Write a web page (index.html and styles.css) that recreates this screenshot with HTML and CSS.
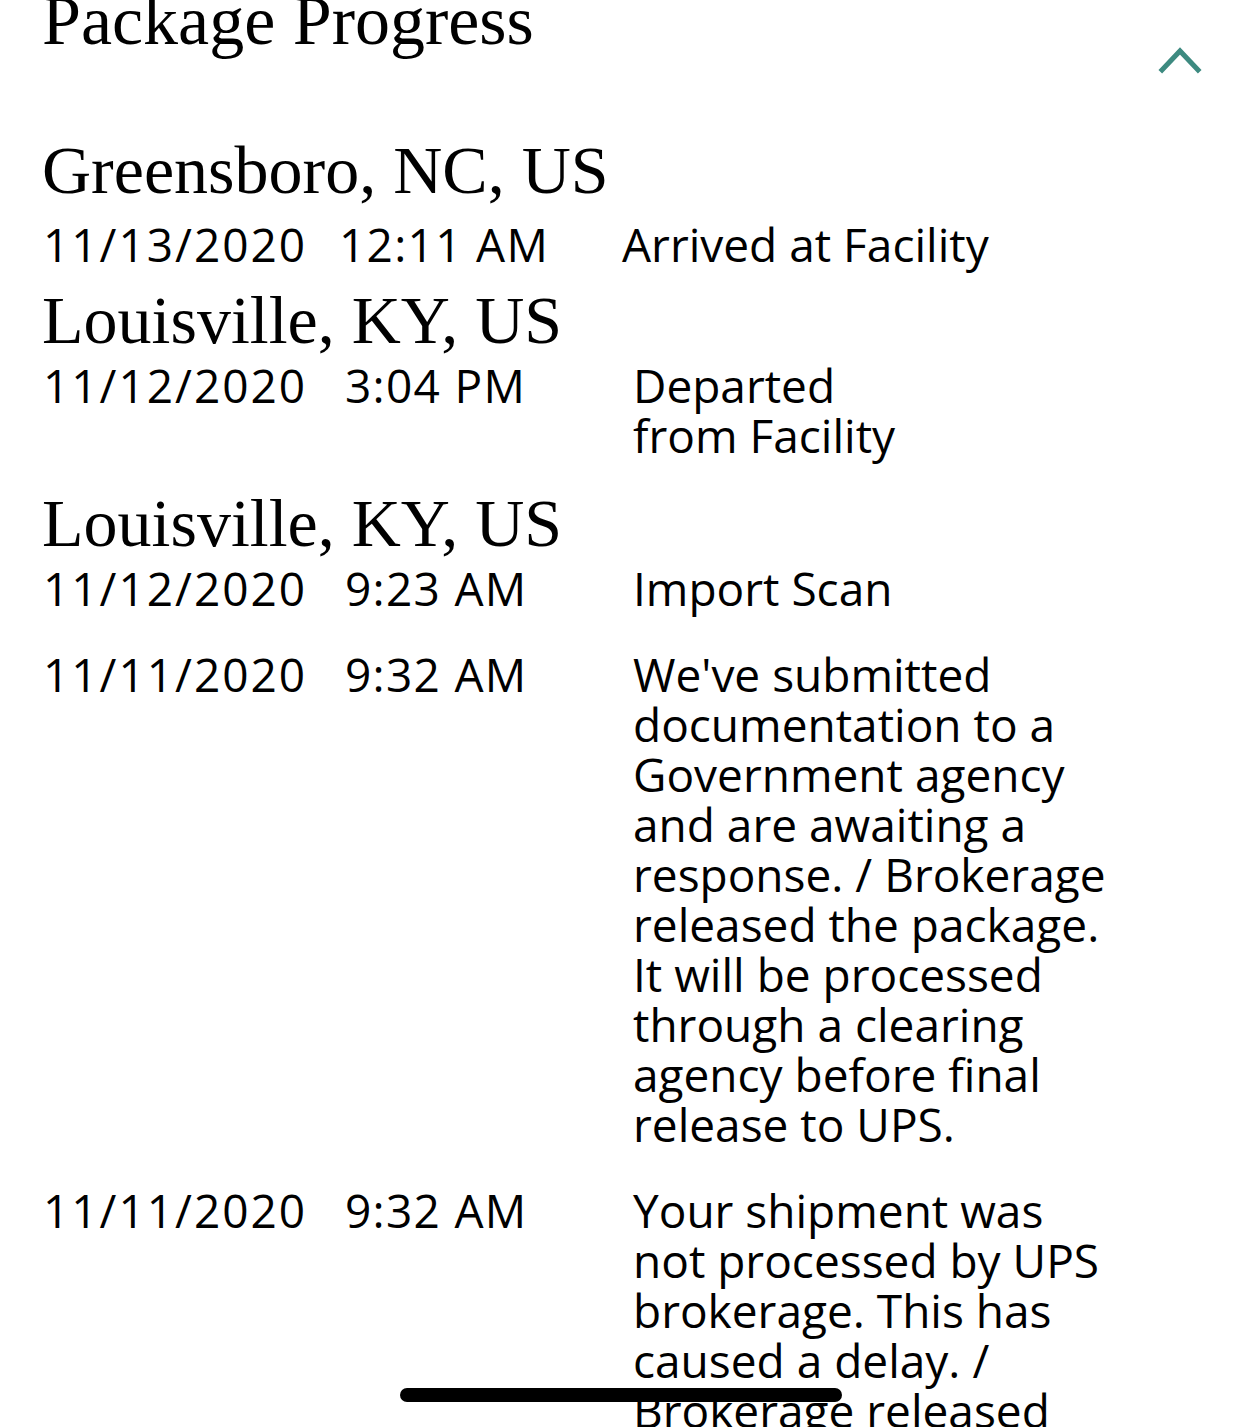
FILE: index.html
```html
<!DOCTYPE html>
<html lang="en">
<head>
<meta charset="utf-8">
<title>Package Progress</title>
<link rel="stylesheet" href="styles.css">
</head>
<body>
<main class="page">
  <header class="header">
    <h1 class="title">Package Progress</h1>
    <button class="toggle" aria-label="Collapse">
      <svg class="chevron" width="44" height="28" viewBox="0 0 44 28" aria-hidden="true">
        <polyline points="4,24 22,5 40,24" fill="none" stroke="#3d8a80" stroke-width="5" stroke-linecap="square" stroke-linejoin="miter"/>
      </svg>
    </button>
  </header>

  <section class="group group--first">
    <h2 class="city">Greensboro, NC, US</h2>
    <div class="events">
      <div class="event event--compact">
        <span class="date">11/13/2020</span>
        <span class="time">12:11 AM</span>
        <span class="desc">Arrived at Facility</span>
      </div>
    </div>
  </section>

  <section class="group group--second">
    <h2 class="city">Louisville, KY, US</h2>
    <div class="events">
      <div class="event">
        <span class="date">11/12/2020</span>
        <span class="time">3:04 PM</span>
        <span class="desc desc--narrow">Departed from Facility</span>
      </div>
    </div>
  </section>

  <section class="group group--third">
    <h2 class="city">Louisville, KY, US</h2>
    <div class="events">
      <div class="event">
        <span class="date">11/12/2020</span>
        <span class="time">9:23 AM</span>
        <span class="desc">Import Scan</span>
      </div>
      <div class="event">
        <span class="date">11/11/2020</span>
        <span class="time">9:32 AM</span>
        <span class="desc">We've submitted documentation to a Government agency and are awaiting a response. / Brokerage released the package. It will be processed through a clearing agency before final release to UPS.</span>
      </div>
      <div class="event">
        <span class="date">11/11/2020</span>
        <span class="time">9:32 AM</span>
        <span class="desc">Your shipment was not processed by UPS brokerage. This has caused a delay. / Brokerage released the package. It will be processed through a clearing agency before final release to UPS.</span>
      </div>
    </div>
  </section>
</main>
<div class="home-indicator"></div>
</body>
</html>
```

FILE: styles.css
```css
html, body {
  margin: 0;
  padding: 0;
  background: #ffffff;
  overflow: hidden;
  height: 100%;
}

body {
  color: #000000;
  font-family: "Open Sans", "Noto Sans", "Liberation Sans", sans-serif;
}

.page {
  padding: 0 40px 0 42px;
}

.header {
  display: flex;
  justify-content: space-between;
  align-items: flex-start;
  height: 70px;
  margin-top: -14px;
}

.title {
  margin: 0;
  font-family: "Liberation Serif", "Times New Roman", serif;
  font-weight: 400;
  font-size: 70px;
  line-height: 70px;
}

.toggle {
  margin: 60px 0 0 0;
  padding: 0;
  border: 0;
  background: none;
  display: flex;
}

.chevron {
  display: block;
}

.group--first {
  margin-top: 80px;
}

.group--second {
  margin-top: 17px;
}

.group--third {
  margin-top: 29px;
}

.city {
  margin: 0;
  font-family: "Liberation Serif", "Times New Roman", serif;
  font-weight: 400;
  font-size: 68px;
  line-height: 68px;
}

.events {
  display: flex;
  flex-direction: column;
  gap: 36px;
  margin-top: 6px;
  margin-left: 1px;
}

.group--first .events {
  margin-top: 15px;
}

.event {
  display: grid;
  grid-template-columns: 302px 288px 490px;
  font-size: 46px;
  line-height: 50px;
}

.event--compact {
  grid-template-columns: 296px 283px 500px;
}

.date {
  letter-spacing: 2px;
}

.time {
  letter-spacing: 1.3px;
}

.desc--narrow {
  max-width: 290px;
}

.home-indicator {
  position: fixed;
  left: 400px;
  top: 1388px;
  width: 442px;
  height: 14px;
  border-radius: 7px;
  background: #000000;
}
```
